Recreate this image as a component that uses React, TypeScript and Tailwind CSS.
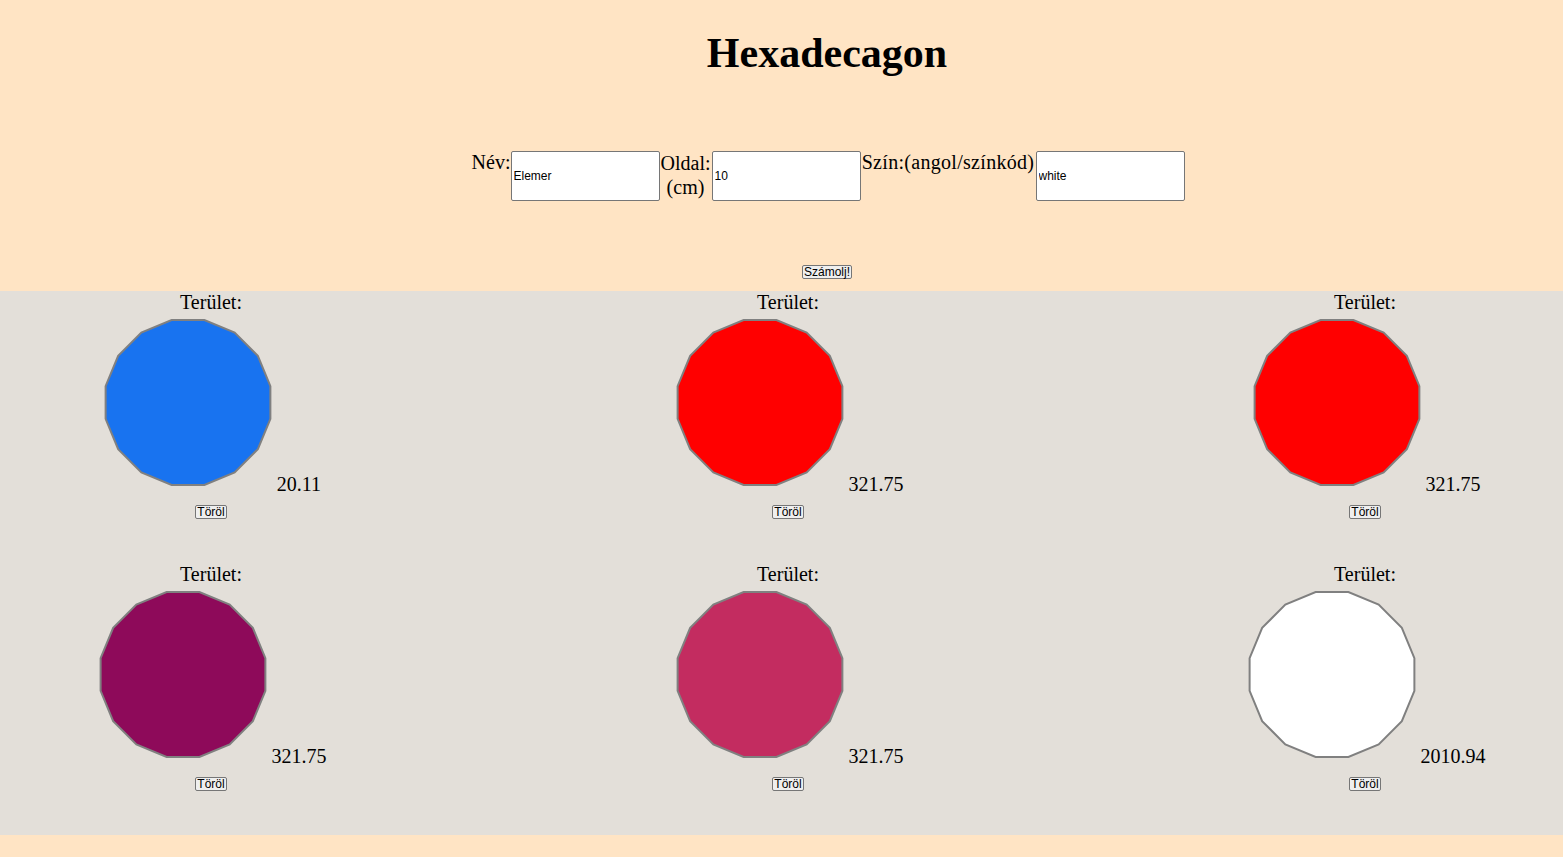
import React from "react";

const items = [
  { color: "#1873f0", area: "20.11" },
  { color: "#ff0000", area: "321.75" },
  { color: "#ff0000", area: "321.75" },
  { color: "#8e0a5a", area: "321.75" },
  { color: "#c32c60", area: "321.75" },
  { color: "#ffffff", area: "2010.94" },
];

function points(cx: number, cy: number, r: number) {
  const pts: string[] = [];
  for (let k = 0; k < 16; k++) {
    const a = ((k * 22.5 + 11.25) * Math.PI) / 180;
    pts.push(`${(cx + r * Math.cos(a)).toFixed(2)},${(cy + r * Math.sin(a)).toFixed(2)}`);
  }
  return pts.join(" ");
}

const POLY = points(87, 88.5, 84);

function Item({ color, area }: { color: string; area: string }) {
  return (
    <div className="w-[360px] pb-[44px] text-center text-[20px] leading-[23px] text-black">
      <div>Terület:</div>
      <div className="leading-[23px]">
        <svg width="171" height="177" viewBox="0 0 171 177" className="inline-block align-baseline">
          <polygon points={POLY} fill={color} stroke="#808080" strokeWidth="2" />
        </svg>{" "}
        {area}
      </div>
      <div className="mt-[9px] flex justify-center">
        <button className="h-[14px] px-[1px] border border-[#767676] rounded-[2px] bg-[#efefef] text-[12px] leading-[12px] text-black font-['Liberation_Sans',Arial,sans-serif]">
          Töröl
        </button>
      </div>
    </div>
  );
}

const inputCls =
  "h-[50px] w-[149px] border border-[#767676] rounded-[2px] bg-white px-[2px] text-[12px] font-['Liberation_Sans',Arial,sans-serif] text-black outline-none";

export default function App() {
  return (
    <div className="min-h-screen bg-[#ffe4c4] font-['Liberation_Serif','Times_New_Roman',serif] text-black">
      <div className="pl-[91px] pb-[12px]">
        <h1 className="pt-[29px] text-center text-[42px] font-bold leading-[48px]">Hexadecagon</h1>
        <div className="mt-[74px] flex justify-center items-start text-[20px] leading-[23px]">
          <label className="w-[41px] text-right">Név:</label>
          <input defaultValue="Elemer" className={inputCls} />
          <label className="w-[52px] text-center leading-[24px]">
            Oldal:
            <br />
            (cm)
          </label>
          <input defaultValue="10" className={inputCls} />
          <label className="w-[175px] text-center tracking-[0.3px]">Szín:(angol/színkód)</label>
          <input defaultValue="white" className={inputCls} />
        </div>
        <div className="mt-[64px] flex justify-center">
          <button className="h-[14px] px-[1px] border border-[#767676] rounded-[2px] bg-[#efefef] text-[12px] leading-[12px] text-black font-['Liberation_Sans',Arial,sans-serif]">
            Számolj!
          </button>
        </div>
      </div>
      <div className="bg-[#e3dfd9] pl-[31px] grid grid-cols-[360px_360px_360px] gap-x-[217px]">
        {items.map((it, i) => (
          <Item key={i} color={it.color} area={it.area} />
        ))}
      </div>
    </div>
  );
}
